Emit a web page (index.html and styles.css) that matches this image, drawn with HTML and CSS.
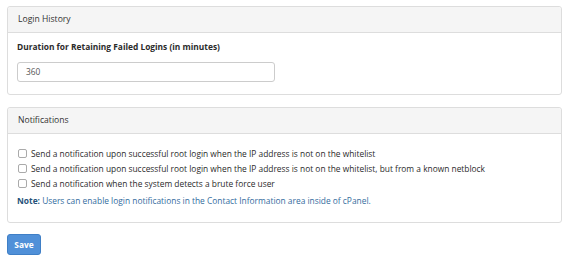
FILE: index.html
```html
<!DOCTYPE html>
<html>
<head>
<meta charset="utf-8">
<link rel="stylesheet" href="styles.css">
</head>
<body>
<div class="page">
  <section class="panel">
    <div class="panel-heading">Login History</div>
    <div class="panel-body first">
      <label class="field-label">Duration for Retaining Failed Logins (in minutes)</label>
      <div class="input">360</div>
    </div>
  </section>
  <section class="panel last">
    <div class="panel-heading">Notifications</div>
    <div class="panel-body second">
      <div class="check"><span class="box"></span><span>Send a notification upon successful root login when the IP address is not on the whitelist</span></div>
      <div class="check"><span class="box"></span><span>Send a notification upon successful root login when the IP address is not on the whitelist, but from a known netblock</span></div>
      <div class="check"><span class="box"></span><span>Send a notification when the system detects a brute force user</span></div>
      <p class="note"><strong>Note:</strong> Users can enable login notifications in the Contact Information area inside of cPanel.</p>
    </div>
  </section>
  <button class="btn">Save</button>
</div>
</body>
</html>
```
FILE: styles.css
```css
html, body { margin: 0; padding: 0; background: #fff; }
body { font-family: "Open Sans", "DejaVu Sans", sans-serif; font-size: 8.4px; color: #2b2b2b; }
.page { padding: 6px 8px 0 7px; display: flex; flex-direction: column; align-items: flex-start; }
.panel { border: 1px solid #ddd; border-radius: 3px; margin-bottom: 12px; box-sizing: border-box; width: 555px; }
.panel.last { margin-bottom: 11px; }
.panel-heading { height: 25px; line-height: 25px; background: #f5f5f5; border-bottom: 1px solid #ddd; padding-left: 10px; color: #333; border-radius: 3px 3px 0 0; font-size: 8.6px; }
.panel-body { padding: 0 9px 0 9px; }
.panel-body.first { padding-top: 7px; box-sizing: border-box; height: 61px; }
.field-label { display: block; font-weight: bold; line-height: 13px; margin-bottom: 9px; }
.input { width: 258px; height: 20px; box-sizing: border-box; border: 1px solid #ccc; border-radius: 3px; line-height: 18px; padding-left: 8px; color: #555; }
.panel-body.second { padding-top: 12px; height: 88px; box-sizing: border-box; }
.check { display: flex; align-items: center; height: 15px; gap: 4px; }
.box { width: 7px; height: 7px; border: 1px solid #aaa; border-radius: 2px; background: #fff; margin-left: 1px; }
.note { margin: 2px 0 0 0; line-height: 15px; color: #336c9e; }
.note strong { color: #25527a; }
.btn { font-family: "Open Sans", "DejaVu Sans", sans-serif; font-size: 8.4px; font-weight: bold; color: #fff; background: #5090d8; border: 1px solid #3f7fc6; border-radius: 3px; width: 34px; height: 21px; padding: 0; }
```
